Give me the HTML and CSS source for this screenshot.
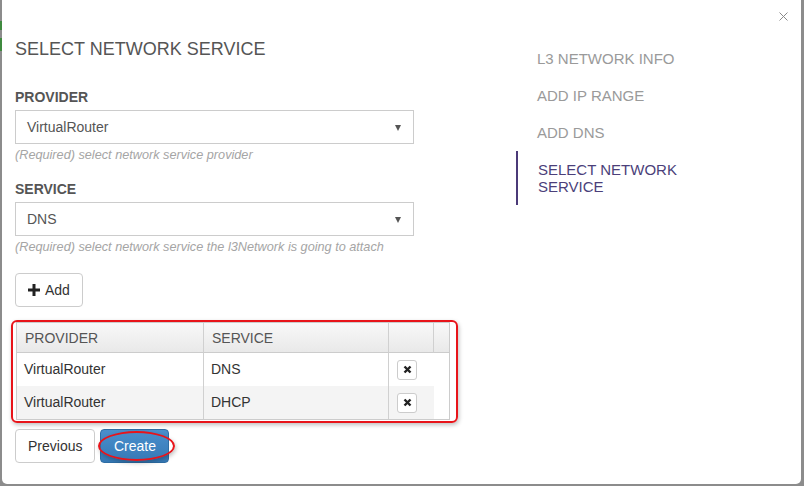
FILE: index.html
```html
<!DOCTYPE html>
<html>
<head>
<meta charset="utf-8">
<link rel="stylesheet" href="styles.css">
</head>
<body>
<div class="backdrop">
  <span class="bg-mark m1"></span><span class="bg-mark m2"></span>
  <div class="modal">
    <button class="close" aria-label="close">
      <svg width="9" height="9" viewBox="0 0 9 9"><path d="M0.5 0.5L8.5 8.5M8.5 0.5L0.5 8.5" stroke="#8a8a8a" stroke-width="1"/></svg>
    </button>
    <div class="main">
      <h2 class="title">SELECT NETWORK SERVICE</h2>
      <div class="field">
        <label class="label">PROVIDER</label>
        <div class="select"><span>VirtualRouter</span><span class="caret"></span></div>
        <p class="help">(Required) select network service provider</p>
      </div>
      <div class="field">
        <label class="label">SERVICE</label>
        <div class="select"><span>DNS</span><span class="caret"></span></div>
        <p class="help">(Required) select network service the l3Network is going to attach</p>
      </div>
      <button class="btn btn-add">
        <svg width="12" height="12" viewBox="0 0 12 12"><path d="M4.5 0H7.5V4.5H12V7.5H7.5V12H4.5V7.5H0V4.5H4.5Z" fill="#222"/></svg>
        Add
      </button>
      <div class="table-wrap">
        <div class="grid">
          <div class="th">PROVIDER</div><div class="th">SERVICE</div><div class="th"></div><div class="th gutter"></div>
          <div class="td">VirtualRouter</div><div class="td">DNS</div><div class="td act"><span class="del"><svg width="9" height="9" viewBox="0 0 9 9"><path d="M1.5 1.5L7.5 7.5M7.5 1.5L1.5 7.5" stroke="#222" stroke-width="2.4"/></svg></span></div><div class="td blank"></div>
          <div class="td odd">VirtualRouter</div><div class="td odd">DHCP</div><div class="td odd act"><span class="del"><svg width="9" height="9" viewBox="0 0 9 9"><path d="M1.5 1.5L7.5 7.5M7.5 1.5L1.5 7.5" stroke="#222" stroke-width="2.4"/></svg></span></div><div class="td blank"></div>
        </div>
        <div class="annot-box"></div>
      </div>
      <div class="actions">
        <button class="btn">Previous</button>
        <button class="btn btn-primary">Create<span class="annot-ellipse"></span></button>
      </div>
    </div>
    <nav class="steps">
      <div class="step">L3 NETWORK INFO</div>
      <div class="step">ADD IP RANGE</div>
      <div class="step">ADD DNS</div>
      <div class="step active">SELECT NETWORK SERVICE</div>
    </nav>
  </div>
</div>
</body>
</html>
```
FILE: styles.css
```css
html, body {
  margin: 0;
  padding: 0;
  width: 804px;
  height: 486px;
  overflow: hidden;
  font-family: "Liberation Sans", Arial, sans-serif;
  background: #8c8c8c;
}
.backdrop {
  position: relative;
  width: 804px;
  height: 486px;
  padding: 0 3px 2px 2px;
  box-sizing: border-box;
}
.bg-mark {
  position: absolute;
  left: 0;
  width: 2px;
  background: #3f8a3f;
}
.m1 { top: 21px; height: 9px; }
.m2 { top: 38px; height: 13px; }
.modal {
  position: relative;
  background: #fff;
  height: 484px;
  border-radius: 0 0 5px 5px;
  display: flex;
  box-sizing: border-box;
  padding: 0 0 0 13px;
}
.close {
  position: absolute;
  right: 13px;
  top: 12px;
  border: 0;
  background: none;
  padding: 0;
  line-height: 0;
}
.main {
  width: 434px;
  padding-top: 39px;
}
.title {
  margin: 0 0 28px;
  font-size: 18px;
  font-weight: normal;
  line-height: 20px;
  color: #555;
}
.label {
  display: block;
  font-size: 14px;
  font-weight: bold;
  line-height: 20px;
  color: #555;
  margin-bottom: 3px;
}
.select {
  width: 399px;
  height: 34px;
  box-sizing: border-box;
  border: 1px solid #ccc;
  display: flex;
  align-items: center;
  justify-content: space-between;
  padding: 0 12px 0 11px;
  font-size: 14px;
  color: #555;
}
.caret {
  width: 0;
  height: 0;
  border-left: 3.5px solid transparent;
  border-right: 3.5px solid transparent;
  border-top: 6px solid #555;
  margin-top: 1px;
}
.help {
  margin: 3px 0 15px;
  font-size: 12.7px;
  font-style: italic;
  line-height: 17px;
  color: #a5a5a5;
}
.field + .field .help { margin-bottom: 17px; }
.btn {
  height: 34px;
  box-sizing: border-box;
  border: 1px solid #ccc;
  border-radius: 4px;
  background: #fff;
  font-family: "Liberation Sans", Arial, sans-serif;
  font-size: 14px;
  color: #333;
  padding: 0 12px;
  display: inline-flex;
  align-items: center;
  gap: 3px;
}
.btn-add {
  width: 68px;
  padding-left: 12px;
  gap: 5px;
}
.table-wrap {
  position: relative;
  margin-top: 15px;
  width: 433px;
}
.grid {
  display: grid;
  grid-template-columns: 187px 185px 45px 15px;
  border: 1px solid #ccc;
  box-sizing: border-box;
  width: 434px;
  margin-left: 1px;
  font-size: 14px;
}
.th {
  height: 29px;
  line-height: 30px;
  padding-left: 8px;
  color: #555;
  background: linear-gradient(#f8f8f8, #e9e9e9);
  border-right: 1px solid #d0d0d0;
  border-bottom: 1px solid #ccc;
}
.th.gutter { border-right: 0; padding: 0; }
.td {
  height: 33px;
  line-height: 33px;
  padding-left: 7px;
  color: #333;
  border-right: 1px solid #d0d0d0;
  background: #fff;
}
.td.odd { background: #f4f4f4; }
.td.blank { border-right: 0; padding: 0; }
.td.act {
  display: flex;
  align-items: center;
  padding-left: 8px;
  border-right: 0;
}
.del {
  width: 20px;
  height: 20px;
  box-sizing: border-box;
  border: 1px solid #ccc;
  border-radius: 3px;
  background: #fff;
  display: flex;
  align-items: center;
  justify-content: center;
}
.annot-box {
  position: absolute;
  left: -4px;
  top: -2px;
  width: 447px;
  height: 103px;
  border: 2px solid #e8141a;
  border-radius: 6px;
  box-sizing: border-box;
  box-shadow: 1px 2px 4px rgba(0,0,0,0.25);
  pointer-events: none;
}
.actions {
  display: flex;
  gap: 5px;
  margin-top: 9px;
}
.btn-primary {
  position: relative;
  background: linear-gradient(#4a8fcc, #3579b6);
  border-color: #2e6da4;
  color: #fff;
  width: 69px;
  justify-content: center;
}
.annot-ellipse {
  position: absolute;
  left: -3px;
  top: 1px;
  width: 77px;
  height: 30px;
  border: 2px solid #e8141a;
  border-radius: 50%;
  box-sizing: border-box;
  box-shadow: 1px 2px 4px rgba(0,0,0,0.25);
}
.steps {
  margin-left: 67px;
  padding-top: 50px;
}
.step {
  font-size: 15px;
  line-height: 17px;
  color: #9a9a9a;
  padding-left: 21px;
  margin-bottom: 20px;
  width: 160px;
}
.step.active {
  color: #4b3f7a;
  border-left: 2px solid #4b3a78;
  padding: 10px 0 10px 20px;
  margin-top: -10px;
}
```
